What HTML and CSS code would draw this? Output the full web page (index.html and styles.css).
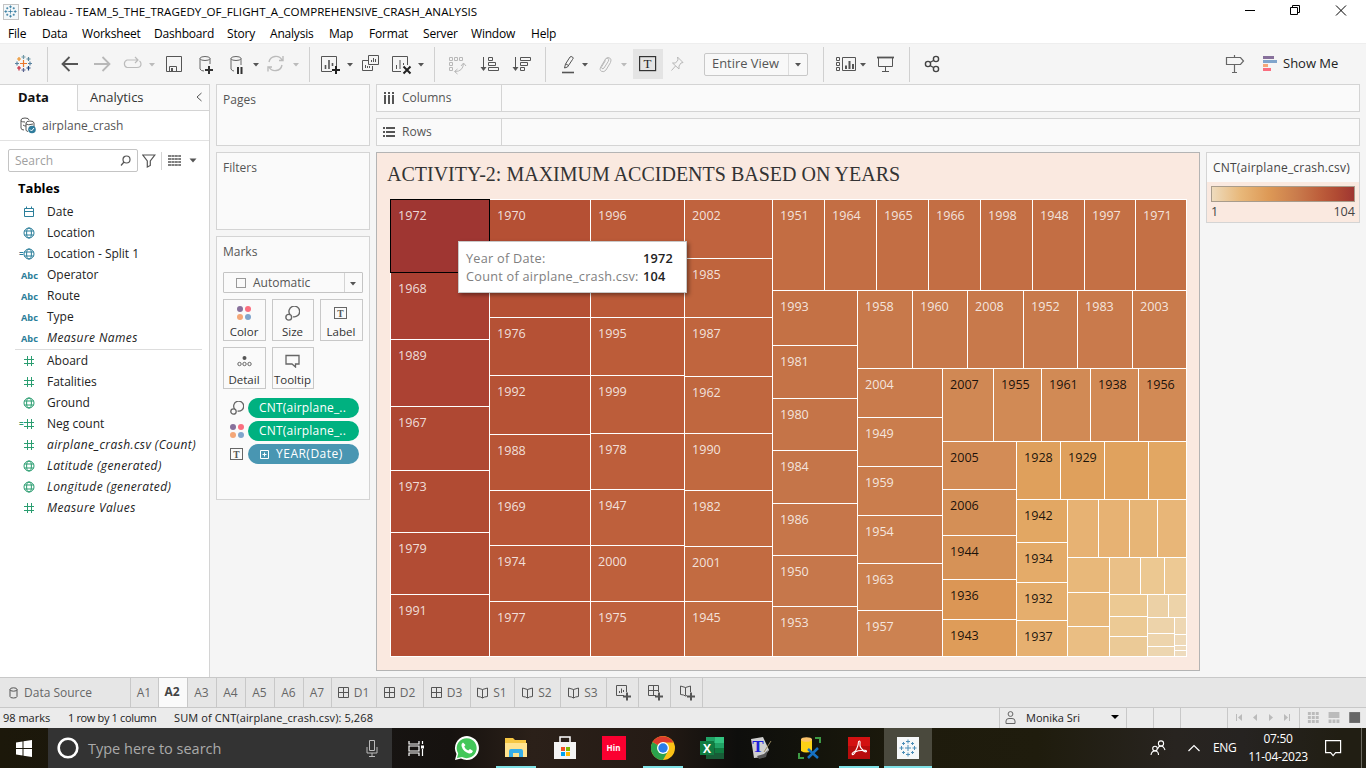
FILE: index.html
```html
<!DOCTYPE html>
<html lang="en">
<head>
<meta charset="utf-8">
<title>Tableau - TEAM_5_THE_TRAGEDY_OF_FLIGHT_A_COMPREHENSIVE_CRASH_ANALYSIS</title>
<link rel="stylesheet" href="styles.css">
</head>
<body>
<svg class="defs" width="0" height="0">
  <defs>
    <symbol id="globe" viewBox="0 0 12 12"><g fill="none" stroke="currentColor"><circle cx="6" cy="6" r="5"/><ellipse cx="6" cy="6" rx="2.4" ry="5"/><path d="M1.3 4h9.4M1.3 8h9.4"/></g></symbol>
    <symbol id="hash" viewBox="0 0 12 12"><path d="M4.5 1v10M8.5 1v10M1 4.5h10M1 8.5h10" stroke="currentColor" fill="none"/></symbol>
    <symbol id="cal" viewBox="0 0 12 12"><path d="M1.5 2.5h9v8h-9zM1.500 5.500h9M3.500 .5v2M8.500 .5v2" stroke="currentColor" fill="none"/></symbol>
    <symbol id="caret" viewBox="0 0 8 24"><path d="M1 11h6l-3 3.500z" fill="currentColor"/></symbol>
    <symbol id="size" viewBox="0 0 14 14"><g fill="none" stroke="#666" stroke-width="1.300"><path d="M4.600 8A5 5 0 1 1 7.600 10"/><circle cx="3.500" cy="10.500" r="2.700"/></g></symbol>
    <symbol id="dots" viewBox="0 0 14 14"><circle cx="3" cy="3" r="3" fill="#87709b"/><circle cx="11" cy="3" r="3" fill="#fa6e7f"/><circle cx="3" cy="11" r="3" fill="#f4a778"/><circle cx="11" cy="11" r="3" fill="#80a5cc"/></symbol>
    <symbol id="label" viewBox="0 0 14 14"><rect x=".5" y="1.500" width="12" height="11" fill="none" stroke="#666"/><text x="6.500" y="10.500" text-anchor="middle" font-family="Liberation Serif,serif" font-weight="700" font-size="9.500" fill="#555">T</text></symbol>
    <symbol id="dash" viewBox="0 0 12 12"><path d="M.5.5h10v10h-10zM5.500.5v10M.5 5.500h10" fill="none" stroke="#555"/></symbol>
    <symbol id="book" viewBox="0 0 12 12"><path d="M.5 1l5 1.500 5-1.500v8.500l-3 .5-2 1-2-1-3-.5zM5.500 2.500v8.500" fill="none" stroke="#555"/></symbol>
    <symbol id="mark" viewBox="0 0 18 18"><path d="M9 6v6M6 9h6M9 .5v4M7 2.500h4M9 13.500v4M7 15.500h4M.5 9h4M2.500 7v4M13.500 9h4M15.500 7v4M4.500 3v3M3 4.500h3M13.500 3v3M12 4.500h3M4.500 12v3M3 13.500h3M13.500 12v3M12 13.500h3" stroke="currentColor" fill="none"/></symbol>
  </defs>
</svg>
<div class="app">
  <header class="titlebar">
    <svg class="applogo" width="16" height="16" viewBox="0 0 16 16"><rect x=".5" y=".5" width="15" height="15" fill="#f4f8fa" stroke="#c4c4c4"/><svg x="1" y="1" width="13" height="13" color="#236f96"><use href="#mark"/></svg></svg>
    <span class="apptitle">Tableau - TEAM_5_THE_TRAGEDY_OF_FLIGHT_A_COMPREHENSIVE_CRASH_ANALYSIS</span>
    <svg class="wincontrols" width="104" height="14" viewBox="0 0 104 14" fill="none" stroke="#000"><path d="M0 7.500h10M45.500 4.500h7v7h-7zM47.500 4.500v-2h7v7h-2M91 2.500l10 10M101 2.500l-10 10"/></svg>
  </header>
  <nav class="menu"><span>File</span><span>Data</span><span>Worksheet</span><span>Dashboard</span><span>Story</span><span>Analysis</span><span>Map</span><span>Format</span><span>Server</span><span>Window</span><span>Help</span></nav>

  <div class="toolbar">
    <svg width="20" height="24" viewBox="14 52 20 24"><g fill="none" stroke-width="1.200"><path d="M23.500 60v7M20 63.500h7" stroke="#e8762d"/><path d="M23.500 55v4M21.500 57h4" stroke="#7199a6"/><path d="M23.500 68v4M21.500 70h4" stroke="#5b6591"/><path d="M15 63.500h4M17 61.500v4M28 63.500h4M30 61.500v4" stroke="#5b83a0"/><path d="M19 57v4M17 59h4" stroke="#eb9129"/><path d="M28.500 57v4M26.500 59h4" stroke="#59879b"/><path d="M19 66v4.500M17 68h4" stroke="#c72035"/><path d="M28.500 66v4.500M26.500 68h4" stroke="#1f447e"/></g></svg>
    <i class="sep"></i>
    <svg width="20" height="24" viewBox="60 52 20 24" fill="none" stroke="#555" stroke-width="1.800"><path d="M78 64H63M69.500 57L62.500 64l7 7"/></svg>
    <svg width="20" height="24" viewBox="92 52 20 24" fill="none" stroke="#b8b8b8" stroke-width="1.800"><path d="M94 64h15M102.500 57l7 7-7 7"/></svg>
    <svg width="22" height="24" viewBox="121 52 22 24" fill="none" stroke="#bbb" stroke-width="1.200"><path d="M129 67.500h-2a4 4 0 0 1 0-7.500h11M135 57l3 3-3 3M133 67.500h4q4 0 4-3.500 0-2-1.500-3M129 67.500h5"/></svg>
    <svg class="off" width="8" height="24"><use href="#caret"/></svg>
    <svg width="18" height="24" viewBox="165 52 18 24" fill="none" stroke="#555"><path d="M166.500 56.500h15v15h-15zM169.500 71v-4.500h7V71"/><path d="M172 68v3" stroke-width="2"/></svg>
    <svg width="20" height="24" viewBox="197 52 20 24" fill="none" stroke="#666"><ellipse cx="205" cy="58.500" rx="5" ry="2"/><path d="M200 58.500v10.500q1 2 4 2M210 58.500V64"/><path d="M205 70h8M209 66v8" stroke="#333" stroke-width="2"/></svg>
    <svg width="18" height="24" viewBox="229 52 18 24" fill="none" stroke="#666"><ellipse cx="236" cy="58.500" rx="5" ry="2"/><path d="M231 58.500v10.500q1 2 3 2M241 58.500V65"/><path d="M238 67v7M241.500 67v7" stroke="#333" stroke-width="2"/></svg>
    <svg class="on" width="8" height="24"><use href="#caret"/></svg>
    <svg width="20" height="24" viewBox="266 52 20 24" fill="none" stroke="#bbb" stroke-width="1.400"><path d="M269 62a7 7 0 0 1 13-2M282 65a7 7 0 0 1-13 2M283 56v4.500h-4M268 71.500V67h4"/></svg>
    <svg class="off" width="8" height="24"><use href="#caret"/></svg>
    <i class="sep"></i>
    <svg width="22" height="24" viewBox="320 52 22 24" fill="none" stroke="#555"><path d="M332 71.500h-10.500v-15h15V66"/><path d="M325.500 69v-4M329 69v-9M332.500 66v-3" stroke-width="1.600"/><path d="M332 70h8M336 66v8" stroke="#222" stroke-width="2"/></svg>
    <svg class="on" width="8" height="24"><use href="#caret"/></svg>
    <svg width="20" height="24" viewBox="362 52 20 24" fill="none" stroke="#555"><path d="M369 60.500h-5.500v10h10V66M369.500 55.500h10v9h-10zM372.500 62v-2M374.500 62v-4M376.500 62v-3M366.500 68v-3M368.500 68v-2M370.500 68v-2"/></svg>
    <svg width="22" height="24" viewBox="392 52 22 24" fill="none" stroke="#555"><path d="M402 71.500h-8.500v-15h15V65M397.500 69v-4M401 69v-9M404.500 65v-2"/><path d="M404.500 66.500l7 7M411.500 66.500l-7 7" stroke="#222" stroke-width="2"/></svg>
    <svg class="on" width="8" height="24"><use href="#caret"/></svg>
    <i class="sep"></i>
    <svg width="20" height="24" viewBox="448 52 20 24" fill="none" stroke="#b8b8b8"><path d="M449.500 57.500h3v3h-3zM454.500 57.500h3v3h-3zM459.500 57.500h3v3h-3zM449.500 62.500h3v3h-3zM449.500 67.500h3v3h-3zM455 71.500q8 0 8.500-8M461 66l2.500-3 2.500 3M457.500 69l-3 2.500 3 2.500"/></svg>
    <svg width="20" height="24" viewBox="480 52 20 24" fill="none" stroke="#555"><path d="M483.500 57v13M488.500 57.500h4v3h-4zM488.500 62.500h7v3h-7zM488.500 67.500h10v3h-10z"/><path d="M480.500 67h6l-3 4z" fill="#555" stroke="none"/></svg>
    <svg width="20" height="24" viewBox="512 52 20 24" fill="none" stroke="#555"><path d="M515.500 57v13M520.500 57.500h10v3h-10zM520.500 62.500h7v3h-7zM520.500 67.500h4v3h-4z"/><path d="M512.500 67h6l-3 4z" fill="#555" stroke="none"/></svg>
    <i class="sep"></i>
    <svg width="16" height="24" viewBox="560 52 16 24" fill="none" stroke="#555"><path d="M564.500 68l1-4 4.500-7q1-1 2.500 0t0 2.500l-5 7.500zM566 64l2.500 1.500"/><path d="M562 72.500h12" stroke-width="1.600"/></svg>
    <svg class="on" width="8" height="24"><use href="#caret"/></svg>
    <svg width="16" height="24" viewBox="598 52 16 24" fill="none" stroke="#b8b8b8"><path d="M602 66.500l4.500-7.500q1.500-1.500 2.700-.5t0 3l-4.200 6.500q-1 1.200-2 .5t-.2-2l3.700-6M602 66.500q-2 3.500.5 4.800t4.500-1.300l4.500-7.500q1.500-3-.7-4.500t-4.300 1"/></svg>
    <svg class="off" width="8" height="24"><use href="#caret"/></svg>
    <span class="tbtn"><svg width="18" height="16" viewBox="0 0 18 16"><rect x=".6" y=".6" width="16" height="14" fill="none" stroke="#333" stroke-width="1.200"/><text x="8.600" y="12.300" text-anchor="middle" font-family="Liberation Serif,serif" font-size="13" fill="#222">T</text></svg></span>
    <svg width="16" height="24" viewBox="670 52 16 24" fill="none" stroke="#b8b8b8"><path d="M677.500 57l5.500 5.500-2 .5-2 3v3l-6.500-6h3l2.500-3zM675.500 66l-4 4.500"/></svg>
    <span class="select"><span>Entire View</span><svg width="8" height="24"><use href="#caret"/></svg></span>
    <i class="sep"></i>
    <svg width="22" height="24" viewBox="835 52 22 24" fill="none" stroke="#555"><path d="M836.500 57.500h3v3h-3zM836.500 62.500h3v3h-3zM836.500 67.500h3v3h-3zM842.500 57.500h13v13h-13z"/><path d="M846 69v-3.500M849.500 69v-8M853 69v-5" stroke-width="2"/></svg>
    <svg class="on" width="8" height="24"><use href="#caret"/></svg>
    <svg width="20" height="24" viewBox="876 52 20 24" fill="none" stroke="#555"><path d="M877 57.500h17" stroke-width="1.800"/><path d="M878.500 58v8.500h14V58M885.500 66v5M882 71.500h7"/></svg>
    <i class="sep"></i>
    <svg width="18" height="24" viewBox="923 52 18 24" fill="none" stroke="#444" stroke-width="1.400"><circle cx="928" cy="64" r="2.600"/><circle cx="936" cy="59" r="2.600"/><circle cx="936" cy="69" r="2.600"/><path d="M930 62.500l3.500-2M930 65.500l3.500 2"/></svg>
    <svg width="20" height="24" viewBox="1225 52 20 24" fill="none" stroke="#666" stroke-width="1.200"><path d="M1226.500 57.500h14l3 3.500-3 3.500h-14zM1234.500 55v2.500M1234.500 64.500v8M1232 72.500h5"/></svg>
    <span class="showme"><svg width="15" height="16"><path d="M0 0h11v3H0z" fill="#87709b"/><path d="M0 4h14v3H0z" fill="#80a5cc"/><path d="M0 8h5v3H0z" fill="#f4a778"/><path d="M0 12h8v3H0z" fill="#fa6e7f"/></svg>Show Me</span>
  </div>

  <main class="work">
    <aside class="data">
      <div class="dtabs"><b>Data</b><span>Analytics<svg width="8" height="12" fill="none" stroke="#555"><path d="M6.500 2L2 6l4.500 4"/></svg></span></div>
      <div class="source"><svg width="18" height="18" fill="none" stroke="#555"><path d="M4 13q-3 0-3-2V3q0-2 4-2t4 2M1 4q1 1 4 1M6 6q0-2 4-2t4 2v5M6 6v7q0 1 2 1.500M6 7q2 1.500 7 0M3 8q1 1 3 1"/><circle cx="12" cy="12.500" r="3.800" fill="#2f7c9c" stroke="none"/><path d="M10 12.500l1.500 1.500 2.500-3" stroke="#fff"/></svg>airplane_crash</div>
      <div class="searchrow">
        <div class="search">Search<svg width="12" height="12" fill="none" stroke="#555" stroke-width="1.200"><circle cx="6.500" cy="4.500" r="3.500"/><path d="M4 7L1 10.500"/></svg></div>
        <svg width="14" height="14" fill="none" stroke="#555" stroke-width="1.200"><path d="M.8 1h12L8.300 7v4.500l-3 1.500V7z"/></svg>
        <i></i>
        <svg width="13" height="12" fill="none" stroke="#555" stroke-width="1.300"><path d="M0 1h13M0 4h13M0 7h13M0 10h13" stroke-dasharray="3 .4"/></svg>
        <svg class="on" width="8" height="24"><path d="M.5 10.500h7l-3.500 4z" fill="currentColor"/></svg>
      </div>
      <h2>Tables</h2>
      <ul class="fields dim">
        <li><svg><use href="#cal"/></svg>Date</li>
        <li><svg><use href="#globe"/></svg>Location</li>
        <li class="calc"><svg><use href="#globe"/></svg>Location - Split 1</li>
        <li><b>Abc</b>Operator</li>
        <li><b>Abc</b>Route</li>
        <li><b>Abc</b>Type</li>
        <li><b>Abc</b><em>Measure Names</em></li>
      </ul>
      <ul class="fields mea">
        <li><svg><use href="#hash"/></svg>Aboard</li>
        <li><svg><use href="#hash"/></svg>Fatalities</li>
        <li><svg><use href="#globe"/></svg>Ground</li>
        <li class="calc"><svg><use href="#hash"/></svg>Neg count</li>
        <li><svg><use href="#hash"/></svg><em>airplane_crash.csv (Count)</em></li>
        <li><svg><use href="#globe"/></svg><em>Latitude (generated)</em></li>
        <li><svg><use href="#globe"/></svg><em>Longitude (generated)</em></li>
        <li><svg><use href="#hash"/></svg><em>Measure Values</em></li>
      </ul>
    </aside>

    <section class="cards">
      <div class="card pages">Pages</div>
      <div class="card filters">Filters</div>
      <div class="card marks">Marks
        <div class="marktype"><i></i><span>Automatic</span><svg class="on" width="8" height="24"><use href="#caret"/></svg></div>
        <div class="mbtns">
          <div><svg width="14" height="14"><use href="#dots"/></svg>Color</div>
          <div><svg width="15" height="15"><use href="#size"/></svg>Size</div>
          <div><svg width="14" height="14"><use href="#label"/></svg>Label</div>
          <div><svg width="15" height="14" fill="none" stroke="#666"><circle cx="7.500" cy="4" r="2" fill="#555" stroke="none"/><circle cx="2.500" cy="10" r="1.700"/><circle cx="7.500" cy="10" r="1.700"/><circle cx="12.500" cy="10" r="1.700"/></svg>Detail</div>
          <div><svg width="15" height="14" fill="none" stroke="#666" stroke-width="1.300"><path d="M1 1.500h13v8.500h-3.500V13L7 10H1z"/></svg>Tooltip</div>
        </div>
        <div class="pills">
          <svg width="14" height="14"><use href="#size"/></svg><span>CNT(airplane_..</span>
          <svg width="14" height="14"><use href="#dots"/></svg><span>CNT(airplane_..</span>
          <svg width="14" height="14"><use href="#label"/></svg><span class="blue"><svg width="9" height="9" fill="none" stroke="#fff"><path d="M.5.5h8v8h-8zM4.500 2.500v4M2.500 4.500h4"/></svg>YEAR(Date)</span>
        </div>
      </div>
    </section>

    <section class="sheet">
      <div class="shelf"><span><svg width="12" height="12" fill="#555"><path d="M1 0h2v2H1zM5 0h2v2H5zM9 0h2v2H9zM1 3h2v9H1zM5 3h2v9H5zM9 3h2v9H9z"/></svg>Columns</span></div>
      <div class="shelf"><span><svg width="12" height="12" fill="#555"><path d="M0 1h2v2H0zM0 5h2v2H0zM0 9h2v2H0zM3 1h9v2H3zM3 5h9v2H3zM3 9h9v2H3z"/></svg>Rows</span></div>
      <div class="stage">
        <div class="view">
          <h1>ACTIVITY-2: MAXIMUM ACCIDENTS BASED ON YEARS</h1>
          <div class="tree">
            <div class="cols" style="grid-template-columns:98px 100px 93px 87px 413px">
              <div class="rows" style="grid-template-rows:72px 66px 66px 63px 61px 61px 61px">
                <p class="sel" style="background:#9f3632">1972</p><p style="background:#aa4032">1968</p><p style="background:#ac4233">1989</p><p style="background:#af4833">1967</p><p style="background:#b14b33">1973</p><p style="background:#b24c34">1979</p><p style="background:#b34e34">1991</p>
              </div>
              <div class="rows" style="grid-template-rows:58px 58px 57px 58px 55px 54px 55px 54px">
                <p style="background:#b55034">1970</p><p style="background:#b55034"></p><p style="background:#b55135">1976</p><p style="background:#b65235">1992</p><p style="background:#b85536">1988</p><p style="background:#b95637">1969</p><p style="background:#b95737">1974</p><p style="background:#ba5838">1977</p>
              </div>
              <div class="rows" style="grid-template-rows:58px 58px 57px 57px 55px 55px 55px 54px">
                <p style="background:#bb5a38">1996</p><p style="background:#bb5a38"></p><p style="background:#bc5c39">1995</p><p style="background:#bc5d3a">1999</p><p style="background:#bd5e3b">1978</p><p style="background:#be603c">1947</p><p style="background:#be603c">2000</p><p style="background:#bf613d">1975</p>
              </div>
              <div class="rows" style="grid-template-rows:58px 58px 58px 56px 56px 55px 54px 54px">
                <p style="background:#c0633e">2002</p><p style="background:#bf643d">1985</p><p style="background:#c0653e">1987</p><p style="background:#c0673f">1962</p><p style="background:#c16940">1990</p><p style="background:#c26b41">1982</p><p style="background:#c26b41">2001</p><p style="background:#c36d42">1945</p>
              </div>
              <div class="rows" style="grid-template-rows:90px 365px">
                <div class="cols" style="grid-template-columns:51px 51px 51px 51px 51px 51px 50px 50px">
                  <p style="background:#c36d43">1951</p><p style="background:#c36e44">1964</p><p style="background:#c36e44">1965</p><p style="background:#c36e44">1966</p><p style="background:#c36e44">1998</p><p style="background:#c36e44">1948</p><p style="background:#c47045">1997</p><p style="background:#c47045">1971</p>
                </div>
                <div class="cols" style="grid-template-columns:84px 328px">
                  <div class="rows" style="grid-template-rows:54px 52px 51px 52px 51px 50px 49px">
                    <p style="background:#c47145">1993</p><p style="background:#c57347">1981</p><p style="background:#c57448">1980</p><p style="background:#c57549">1984</p><p style="background:#c6764a">1986</p><p style="background:#c6774b">1950</p><p style="background:#c7794c">1953</p>
                  </div>
                  <div class="rows" style="grid-template-rows:77px 287px">
                    <div class="cols" style="grid-template-columns:54px 54px 55px 53px 54px 53px">
                      <p style="background:#c8794b">1958</p><p style="background:#c8794b">1960</p><p style="background:#c8794b">2008</p><p style="background:#c87a4c">1952</p><p style="background:#c97a4c">1983</p><p style="background:#c97b4c">2003</p>
                    </div>
                    <div class="cols" style="grid-template-columns:84px 243px">
                      <div class="rows" style="grid-template-rows:48px 48px 48px 47px 46px 45px">
                        <p style="background:#c97b4c">2004</p><p style="background:#ca7d4d">1949</p><p style="background:#ca7d4d">1959</p><p style="background:#cb7f4f">1954</p><p style="background:#cb804f">1963</p><p style="background:#cc8251">1957</p>
                      </div>
                      <div class="rows" style="grid-template-rows:72px 214px">
                        <div class="cols dark" style="grid-template-columns:50px 47px 48px 47px 47px">
                          <p style="background:#d08854">2007</p><p style="background:#d18a55">1955</p><p style="background:#d18a55">1961</p><p style="background:#d28a55">1938</p><p style="background:#d28a55">1956</p>
                        </div>
                        <div class="cols dark" style="grid-template-columns:73px 169px">
                          <div class="rows" style="grid-template-rows:47px 45px 43px 39px 36px">
                            <p style="background:#d38c56">2005</p><p style="background:#d48f56">2006</p><p style="background:#d69257">1944</p><p style="background:#db9655">1936</p><p style="background:#de9c59">1943</p>
                          </div>
                          <div class="rows" style="grid-template-rows:57px 156px">
                            <div class="cols" style="grid-template-columns:43px 43px 43px 37px">
                              <p style="background:#dfa05c">1928</p><p style="background:#dfa05c">1929</p><p style="background:#e0a25e"></p><p style="background:#e2a763"></p>
                            </div>
                            <div class="cols" style="grid-template-columns:50px 118px">
                              <div class="rows" style="grid-template-rows:42px 39px 37px 35px">
                                <p style="background:#e2a763">1942</p><p style="background:#e4ab69">1934</p><p style="background:#e5ae6d">1932</p><p style="background:#e6b070">1937</p>
                              </div>
                              <div class="rows" style="grid-template-rows:57px 98px">
                                <div class="cols" style="grid-template-columns:30px 30px 27px 28px">
                                  <p style="background:#e7b273"></p><p style="background:#e7b273"></p><p style="background:#e7b576"></p><p style="background:#e8b678"></p>
                                </div>
                                <div class="cols" style="grid-template-columns:41px 76px">
                                  <div class="rows" style="grid-template-rows:34px 33px 29px">
                                    <p style="background:#e8b87a"></p><p style="background:#e8b97c"></p><p style="background:#eabe83"></p>
                                  </div>
                                  <div class="rows" style="grid-template-rows:36px 61px">
                                    <div class="cols" style="grid-template-columns:30px 23px 21px">
                                      <p style="background:#eac087"></p><p style="background:#ecc891"></p><p style="background:#edc994"></p>
                                    </div>
                                    <div class="cols" style="grid-template-columns:37px 38px">
                                      <div class="rows" style="grid-template-rows:21px 19px 19px">
                                        <p style="background:#ecc993"></p><p style="background:#ecca95"></p><p style="background:#ebca97"></p>
                                      </div>
                                      <div class="rows" style="grid-template-rows:22px 38px">
                                        <div class="cols" style="grid-template-columns:20px 17px"><p style="background:#ecd1a6"></p><p style="background:#edd3a9"></p></div>
                                        <div class="cols" style="grid-template-columns:26px 11px">
                                          <div class="rows" style="grid-template-rows:15px 12px 9px"><p style="background:#edd3aa"></p><p style="background:#edd4ac"></p><p style="background:#edd6b0"></p></div>
                                          <div class="rows" style="grid-template-rows:16px 10px 4px 5px"><p style="background:#eed7b3"></p><p style="background:#eed9b8"></p><p style="background:#eedabb"></p><p style="background:#eedbbd"></p></div>
                                        </div>
                                      </div>
                                    </div>
                                  </div>
                                </div>
                              </div>
                            </div>
                          </div>
                        </div>
                      </div>
                    </div>
                  </div>
                </div>
              </div>
            </div>
          </div>
          <div class="tooltip"><span>Year of Date:</span><b>1972</b><span>Count of airplane_crash.csv:</span><b>104</b></div>
        </div>
        <div class="legend"><span>CNT(airplane_crash.csv)</span><div><i></i><p><b>1</b><b>104</b></p></div></div>
      </div>
    </section>
  </main>

  <nav class="tabs">
    <span class="ds"><svg width="10" height="12" viewBox="0 0 10 12" fill="none" stroke="#555"><path d="M1 2.500v7q0 1.500 3.500 1.500T8 9.500v-7"/><ellipse cx="4.500" cy="2.500" rx="3.500" ry="1.700"/></svg>Data Source</span><span>A1</span><span class="active">A2</span><span>A3</span><span>A4</span><span>A5</span><span>A6</span><span>A7</span>
    <span><svg width="12" height="12"><use href="#dash"/></svg>D1</span><span><svg width="12" height="12"><use href="#dash"/></svg>D2</span><span><svg width="12" height="12"><use href="#dash"/></svg>D3</span>
    <span><svg width="12" height="12"><use href="#book"/></svg>S1</span><span><svg width="12" height="12"><use href="#book"/></svg>S2</span><span><svg width="12" height="12"><use href="#book"/></svg>S3</span>
    <span class="new"><svg width="16" height="16" fill="none" stroke="#555"><path d="M8 10.500H.5v-10h10V7M3.500 8V6M5.500 8V3.500M7.500 7V5"/><path d="M7 11.500h8M11 7.500v8" stroke-width="2"/></svg></span>
    <span class="new"><svg width="16" height="16" fill="none" stroke="#555"><path d="M8 10.500H.5v-10h10V7M5.500.5v10M.5 5.500h10"/><path d="M7 11.500h8M11 7.500v8" stroke-width="2"/></svg></span>
    <span class="new"><svg width="16" height="16" fill="none" stroke="#555"><path d="M7 10.500l-1.500.5-2-1-3-.5V1l5 1.500 5-1.500v6M5.500 2.500v8"/><path d="M7 11.500h8M11 7.500v8" stroke-width="2"/></svg></span>
  </nav>
  <footer class="status">
    <span class="st1">98 marks</span><span class="st2">1 row by 1 column</span><span class="st3">SUM of CNT(airplane_crash.csv): 5,268</span>
    <span class="user"><svg width="12" height="14" fill="none" stroke="#666"><circle cx="5.500" cy="3" r="2.400"/><path d="M1 12.500V10q0-2.500 3-2.500h3q3 0 3 2.500v2.500z"/></svg><em>Monika Sri</em><svg width="8" height="5"><path d="M0 0h8L4 4z"/></svg></span>
    <i></i><i></i><i></i>
    <svg width="71" height="20" viewBox="1228 708 71 20" fill="#bbb"><path d="M1236 714h1v7h-1zM1242 714v7l-4-3.500zM1257 714v7l-4-3.500zM1269 714v7l4-3.500zM1284 714v7l4-3.500zM1289 714h1v7h-1z"/></svg>
    <svg class="modes" width="67" height="20" viewBox="1299 708 67 20" fill="#bbb"><path d="M1307 712h3v3h-3zM1311 712h3v3h-3zM1315 712h3v3h-3zM1307 716h3v3h-3zM1311 716h3v3h-3zM1315 716h3v3h-3zM1307 720h3v3h-3zM1311 720h3v3h-3zM1315 720h3v3h-3zM1328 712h11v6h-11zM1328 719.500h3v3.500h-3zM1332 719.500h3v3.500h-3zM1336 719.500h3v3.500h-3z"/><path d="M1349 712h11v11h-11z" fill="#666"/></svg>
  </footer>

  <div class="taskbar">
    <span class="start"><svg width="16" height="17" fill="#fff"><path d="M0 2.500l6.500-1V8H0zM7.500 1.300L16 0v8H7.500zM0 9h6.500v6.500L0 14.500zM7.500 9H16v8l-8.500-1.300z"/></svg></span>
    <div class="cortana"><svg width="22" height="22" fill="none"><circle cx="11" cy="11" r="9.300" stroke="#fff" stroke-width="2.600"/></svg><span>Type here to search</span><svg width="12" height="17" fill="none" stroke="#bbb"><path d="M3.500.5h5v10h-5zM1 7v6h10V7M6 13v3M3 16.500h6"/></svg></div>
    <span class="app-i view-i"><svg width="17" height="17" fill="none" stroke="#fff" stroke-width="1.200"><path d="M1 1v3h10V1M1 6h10v5H1zM1 16v-3h10v3M14.500 1v3M14.500 9v7"/><path d="M13 5.500h3v3h-3z" fill="#fff" stroke="none"/></svg></span>
    <span class="app-i"><svg width="26" height="26" viewBox="0 0 26 26"><path d="M1 25l1.500-6A12 12 0 1 1 7 23.500z" fill="#fff"/><path d="M3 23l1.200-4.500A10 10 0 1 1 8 22z" fill="#43c75a"/><path d="M9 7.500q-2 1-1.500 3.500 1.500 5.500 7.500 7.500 3 .5 4-2.500l-3-2-1.800 1.500q-3-1-4-4l1.300-1.500z" fill="#fff"/></svg></span>
    <span class="app-i run"><svg width="24" height="22" viewBox="0 0 24 22"><path d="M1 3V1h8l2 2h11v17H1z" fill="#f5c643"/><path d="M1 6h22v14H1z" fill="#ffe38f"/><path d="M5 20v-6q0-2 2-2h10q2 0 2 2v6h-4v-4H9v4z" fill="#36aee8"/></svg></span>
    <span class="app-i"><svg width="24" height="26" viewBox="0 0 24 26"><path d="M7 7V2h10v5" fill="none" stroke="#fff" stroke-width="1.500"/><path d="M1 7h22v17H1z" fill="#f4f4f4"/><path d="M8 12h4v4H8z" fill="#f25022"/><path d="M13 12h4v4h-4z" fill="#7fba00"/><path d="M8 17h4v4H8z" fill="#00a4ef"/><path d="M13 17h4v4h-4z" fill="#ffb900"/></svg></span>
    <span class="app-i"><b class="hin">Hin</b></span>
    <span class="app-i run"><svg width="24" height="24" viewBox="0 0 24 24"><circle cx="12" cy="12" r="12" fill="#fbc116"/><path d="M12 12L1.600 6A12 12 0 0 0 12 24l5-9z" fill="#2ba24c"/><path d="M12 12L1.600 6A12 12 0 0 1 22.400 6.500H12z" fill="#dd3b2d"/><circle cx="12" cy="12" r="6" fill="#fff"/><circle cx="12" cy="12" r="4.700" fill="#2a7de9"/></svg></span>
    <span class="app-i"><svg width="24" height="22" viewBox="0 0 24 22"><path d="M6 0h9v6H6z" fill="#21a366"/><path d="M15 0h9v6h-9z" fill="#33c481"/><path d="M6 6h9v5H6z" fill="#107c41"/><path d="M15 6h9v5h-9z" fill="#21a366"/><path d="M6 11h18v11H6z" fill="#185c37"/><path d="M15 11h9v5h-9z" fill="#107c41"/><path d="M0 4h14v14H0z" fill="#107c41"/><text x="7" y="15.500" text-anchor="middle" font-family="Open Sans,sans-serif" font-weight="700" font-size="12" fill="#fff">X</text></svg></span>
    <span class="app-i"><svg class="ticon" width="24" height="24" viewBox="0 0 24 24"><path d="M2 3l12-2 6 13-5 7-10 1z" fill="#cfcfcf"/><path d="M8 20l7-2 4-4-2 7-7 2z" fill="#555"/><text x="9" y="16" text-anchor="middle" font-family="Liberation Serif,serif" font-weight="700" font-size="17" fill="#1d22d8">T</text><path d="M22 5l-7 11" stroke="#998a60"/></svg></span>
    <span class="app-i"><svg width="24" height="24" viewBox="0 0 24 24"><path d="M3 3v12q5 3 11 0V3z" fill="#fcd116"/><ellipse cx="8.500" cy="3.500" rx="5.500" ry="2.300" fill="#fbc36a"/><path d="M17 2h5v5M1 17v5h5" fill="none" stroke="#3e9b45" stroke-width="2"/><path d="M10 13l10 9M20 12L10 22" stroke="#1671c2" stroke-width="2.500"/></svg></span>
    <span class="app-i run"><svg width="22" height="22" viewBox="0 0 22 22"><path d="M0 0h22v22H0z" fill="#b80c0c"/><path d="M0 0h22v9H0z" fill="#d31111"/><path d="M4.500 17.500q-1.500-1 3-3.500 3-5.500 2.800-8 0-2 1-2t.7 2.500q-.5 4 3 6.500 4 .3 3.500 1.500-1 1-4-1-4-.2-7 1.200-2 3.500-3 2.800z" fill="none" stroke="#fff" stroke-width="1.100"/></svg></span>
    <span class="app-i run cur"><svg width="22" height="22" viewBox="0 0 22 22"><path d="M0 0h22v22H0z" fill="#f6f8f9"/><svg x="2" y="2" width="18" height="18" color="#4d8fb8"><use href="#mark"/></svg></svg></span>
    <div class="tray">
      <svg width="16" height="16" fill="none" stroke="#fff" stroke-width="1.100"><circle cx="11" cy="3.500" r="2.600"/><path d="M7.500 9q1-3 3.500-3t4 4"/><circle cx="5" cy="8.500" r="2.300"/><path d="M1 15q.5-4 4-4t3.500 4"/></svg>
      <svg class="chev" width="12" height="8" fill="none" stroke="#fff" stroke-width="1.200"><path d="M.5 7L6 1.500 11.500 7"/></svg>
      <span class="lang">ENG</span>
      <span class="clock">07:50<br>11-04-2023</span>
      <svg class="note" width="17" height="17" fill="none" stroke="#fff" stroke-width="1.200"><path d="M.6.6h15v12h-5l-2.500 3-2.500-3h-5z"/></svg>
      <i></i>
    </div>
  </div>
</div>
</body>
</html>
```
FILE: styles.css
```css
* { box-sizing: border-box; }
body { margin: 0; overflow: hidden; font-family: "Open Sans", "Noto Sans", sans-serif; font-size: 12px; color: #333; }
h1, h2, p, ul { margin: 0; padding: 0; font-weight: 400; list-style: none; }
svg { display: block; flex: none; }
.defs { position: absolute; }
.app { width: 1366px; height: 768px; display: flex; flex-direction: column; background: #f5f5f5; }

.titlebar { height: 23px; background: #fff; display: flex; align-items: center; padding-left: 3px; color: #000; }
.applogo { margin-right: 4px; }
.apptitle { flex: 1; font-size: 11.6px; letter-spacing: .045px; white-space: nowrap; }
.wincontrols { margin-right: 17px; margin-bottom: 3px; }
.menu { height: 20px; background: #fff; display: grid; grid-template-columns: 34px 40px 72px 73px 43px 59px 40px 54px 48px 60px 60px; padding-left: 8px; line-height: 21px; color: #000; font-size: 12px; letter-spacing: -.2px; white-space: nowrap; }

.toolbar { height: 41px; border-top: 1px solid #eee; display: grid; align-items: center; padding-left: 14px; grid-template-columns: 33px 13px 32px 29px 27px 17px 32px 32px 23px 14px 26px 17px 11px 26px 15px 30px 26px 17px 14px 32px 32px 33px 15px 21px 16px 23px 13px 37px 34px 119px 12px 24px 17px 33px 14px 302px 37px 90px; color: #555; }
.sep { width: 1px; height: 35px; background: #d0d0d0; }
.off { color: #bbb; }
.on { color: #555; }
.tbtn { width: 30px; height: 30px; background: #e4e4e4; display: grid; place-items: center; }
.select { width: 104px; height: 23px; border: 1px solid #c8c8c8; border-radius: 2px; background: #f8f8f8; display: flex; align-items: center; padding-left: 7px; font-size: 12.900px; }
.select span { width: 77px; border-right: 1px solid #ddd; line-height: 19px; height: 21px; white-space: nowrap; }
.select svg { margin-left: 5px; }
.showme { display: flex; align-items: center; gap: 6px; font-size: 13px; line-height: 14px; padding: 0 0 2px 1px; color: #222; white-space: nowrap; }
.showme svg { margin: 1px -1px 0 0; }

.work { height: 593px; display: flex; }
.data { width: 210px; height: 593px; background: #fff; border-right: 1px solid #d4d4d4; border-top: 1px solid #d4d4d4; }
.dtabs { height: 26px; display: flex; line-height: 25px; font-size: 13px; color: #333; }
.dtabs b { width: 77px; padding-left: 18px; color: #111; }
.dtabs span { flex: 1; border-left: 1px solid #d4d4d4; border-bottom: 1px solid #d4d4d4; padding: 0 6px 1px 12px; display: flex; justify-content: space-between; align-items: center; background: #fafafa; line-height: 23px; }
.source { height: 30px; border-bottom: 1px solid #e2e2e2; display: flex; align-items: center; gap: 4px; padding-left: 20px; color: #555; }
.searchrow { height: 39px; display: flex; align-items: center; padding-left: 8px; }
.search { width: 130px; height: 23px; border: 1px solid #c4c4c4; border-radius: 2px; display: flex; align-items: center; justify-content: space-between; padding: 0 5px 0 6px; color: #a0a0a0; margin-right: 4px; }
.searchrow i { width: 1px; height: 18px; background: #d4d4d4; margin: 0 6px 0 5px; }
.searchrow .on { margin-left: 8px; margin-top: -1px; }
.data h2 { font-size: 13px; font-weight: 700; color: #000; padding-left: 18px; height: 21px; line-height: 17px; }
.fields { margin: 0 7px 0 15px; }
.fields.dim { border-bottom: 1px solid #ddd; height: 149px; }
.fields li { height: 21px; display: flex; align-items: center; white-space: nowrap; color: #222; }
.fields li em { letter-spacing: .4px; }
.fields li svg { width: 12px; height: 12px; margin: 0 12px 0 8px; }
.fields li b { width: 26px; margin-left: 6px; font-size: 9.200px; margin-top: 1px; }
.dim svg, .dim b { color: #2b7e9a; }
.fields li b { color: #2b7e9a; }
.mea svg { color: #2a9d70; }
.fields li.calc::before { content: "="; width: 5px; font-size: 8px; font-weight: 700; margin-left: 4px; color: #2b7e9a; }
.mea li.calc::before { color: #2a9d70; }
.fields li.calc svg { margin-left: -1px; }

.cards { width: 154px; margin-left: 6px; display: flex; flex-direction: column; gap: 6px; }
.card { border: 1px solid #d4d4d4; background: #fafafa; padding: 6px 6px; line-height: 17px; color: #555; }
.pages { height: 62px; }
.filters { height: 78px; }
.marks { height: 264px; }
.marktype { margin-top: 12px; height: 21px; border: 1px solid #c4c4c4; border-radius: 1px; background: #fafafa; display: flex; align-items: center; }
.marktype i { width: 10px; height: 10px; border: 1px solid #999; margin: 0 7px 0 12px; }
.marktype span { width: 92px; height: 19px; line-height: 19px; border-right: 1px solid #d4d4d4; }
.marktype svg { margin-left: 4px; }
.mbtns { display: grid; grid-template-columns: 43px 42px 43px; grid-auto-rows: 42px; gap: 6px; margin-top: 6px; }
.mbtns div { border: 1px solid #c8c8c8; background: #fafafa; display: flex; flex-direction: column; align-items: center; justify-content: space-between; padding: 6px 1px 0 0; font-size: 11.500px; color: #333; }
.pills { display: grid; grid-template-columns: 18px 111px; grid-auto-rows: 20px; row-gap: 3px; margin: 9px 0 0 7px; align-items: center; }
.pills span { height: 20px; border-radius: 10px; background: #00b180; color: #fff; padding-left: 11px; line-height: 20px; letter-spacing: .2px; white-space: nowrap; }
.pills .blue { background: #4996b2; display: flex; align-items: center; gap: 7px; padding-left: 12px; letter-spacing: .5px; }

.sheet { width: 984px; margin-left: 6px; display: flex; flex-direction: column; gap: 6px; }
.shelf { height: 28px; border: 1px solid #d4d4d4; background: #fafafa; }
.shelf span { width: 125px; height: 26px; border-right: 1px solid #d4d4d4; display: flex; align-items: center; gap: 7px; padding: 0 0 1px 6px; color: #555; }
.stage { display: flex; gap: 6px; align-items: flex-start; }
.view { position: relative; width: 824px; height: 519px; border: 1px solid #b4b4b4; background: #fae9e0; }
h1 { font: 20px/24px "Liberation Serif", serif; color: #333; height: 46px; padding: 9px 0 0 10px; white-space: nowrap; }
.tree { width: 797px; height: 458px; margin-left: 13px; background: #fff; padding: 1px; }
.cols, .rows { display: grid; gap: 1px; }
.cols { grid-auto-flow: column; }
.tree p { padding: 6px 0 0 7px; font-size: 12.600px; line-height: 20px; color: rgba(255,255,255,.82); overflow: hidden; min-height: 0; }
.tree p:empty { padding: 0; }
.tree .dark p { color: rgba(0,0,0,.88); }
.tree p.sel { outline: 1px solid #000; position: relative; }
.tooltip { position: absolute; left: 81px; top: 88px; width: 229px; height: 52px; background: #fff; border: 1px solid #c8c8c8; box-shadow: 2px 2px 4px rgba(0,0,0,.4); padding: 7px 7px; display: grid; grid-template-columns: 177px 1fr; align-content: start; line-height: 18px; font-size: 12.700px; letter-spacing: .26px; color: #808080; white-space: nowrap; }
.tooltip b { color: #222; font-weight: 600; }
.legend { width: 154px; height: 71px; border: 1px solid #d4d4d4; background: #fafafa; color: #444; }
.legend > span { display: block; height: 29px; line-height: 30px; padding-left: 6px; font-size: 12px; letter-spacing: .2px; }
.legend > div { height: 40px; background: #fae9e0; padding: 4px; }
.legend i { display: block; height: 16px; border: 1px solid #a89c8c; background: linear-gradient(90deg, #eedbbd, #e8b87a 20%, #dd9956 40%, #c97b4c 60%, #bd5e3b 76%, #b04a33 88%, #9f3632); }
.legend p { display: flex; justify-content: space-between; line-height: 20px; font-size: 12.600px; }
.legend b { font-weight: 400; }

.tabs { height: 31px; border-top: 1px solid #c8c8c8; border-bottom: 1px solid #c8c8c8; background: #e6e6e6; display: grid; grid-template-columns: 131px 28px 29px 29px 29px 29px 29px 28px 45px 47px 47px 44px 46px 46px 32px 32px 32px; font-size: 12px; color: #666; }
.tabs span { border-right: 1px solid #c8c8c8; display: flex; align-items: center; justify-content: center; gap: 4px; padding-right: 1px; }
.tabs .ds { justify-content: flex-start; padding-left: 9px; gap: 5px; }
.tabs .active { background: #fafafa; font-weight: 700; color: #444; padding-bottom: 2px; padding-right: 2px; }
.tabs .new { padding: 1px 0 0 2px; }
.status { height: 20px; background: #ebebeb; display: flex; align-items: center; padding-left: 3px; font-size: 11px; line-height: 16px; color: #222; white-space: nowrap; }
.status > span { padding-bottom: 1px; }
.st1 { width: 65px; }
.st2 { width: 106px; letter-spacing: -.35px; }
.st3 { flex: 1; letter-spacing: .11px; }
.user { width: 128px; height: 20px; border: solid #c8c8c8; border-width: 0 1px; display: flex; align-items: center; padding: 0 7px 0 5px; }
.user em { flex: 1; font-style: normal; padding-left: 9px; }
.status i { width: 27px; height: 20px; border-right: 1px solid #c8c8c8; }
.status i:nth-of-type(3) { width: 47px; }
.modes { border-left: 1px solid #c8c8c8; }

.taskbar { height: 40px; background: linear-gradient(90deg, #1c180a, #171412 28%, #16120f 33%, #2b2019 39%, #251b15 48%, #0e0e0c 54%, #14140b 60%, #1e1b0c 67%, #1f1c0d 76%, #282420 86%, #262321 91%, #211e13 98%); display: flex; align-items: center; color: #fff; }
.start { width: 48px; display: grid; place-items: center; }
.cortana { width: 344px; height: 40px; background: #333; display: flex; align-items: center; padding: 0 14px 0 9px; color: #aaa; font-size: 14.500px; }
.cortana span { flex: 1; padding-left: 9px; }
.app-i { width: 49px; height: 40px; display: grid; place-items: center; padding-right: 2px; }
.view-i { width: 51px; padding-right: 3px; }
.run { background: linear-gradient(#7fe1e6, #7fe1e6) 4px bottom / 40px 2px no-repeat; }
.cur { width: 48px; padding-right: 0; background: linear-gradient(#7fe1e6, #7fe1e6) center bottom / 48px 2px no-repeat #4a493d; }
.hin { width: 24px; height: 24px; background: #fb0030; font-size: 8px; line-height: 24px; text-align: center; }
.tray { flex: 1; display: flex; align-items: center; justify-content: flex-end; font-size: 12px; padding-right: 4px; }
.chev { margin: 0 12px 0 22px; }
.lang { width: 33px; letter-spacing: -.3px; padding: 0 0 1px 1px; }
.clock { width: 66px; margin-right: 14px; text-align: center; line-height: 18px; letter-spacing: -.3px; }
.ticon { overflow: visible; }
.tray i { width: 1px; height: 40px; background: #6b6960; margin-left: 19px; }
```
